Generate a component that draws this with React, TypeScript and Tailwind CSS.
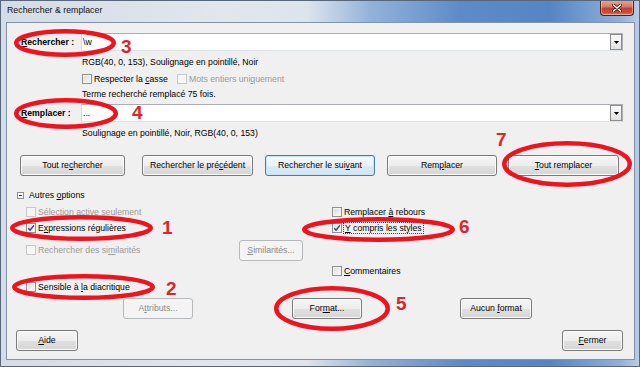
import type { ReactNode } from 'react';

// Boîte de dialogue « Rechercher & remplacer » (style Windows 7) avec annotations rouges.

function U({ children }: { children: ReactNode }) {
  return <span className="underline decoration-[0.8px] underline-offset-[1px]">{children}</span>;
}

function Checkbox({ checked = false, disabled = false }: { checked?: boolean; disabled?: boolean }) {
  return (
    <span
      className={`flex h-[10px] w-[10px] shrink-0 items-center justify-center border ${
        disabled
          ? 'border-[#c8c8c8] bg-[#f6f6f6]'
          : 'border-[#8e8f8f] bg-[linear-gradient(135deg,#d9d9d9,#fbfbfb)] shadow-[inset_0_0_0_1px_#f4f4f4]'
      }`}
    >
      {checked ? (
        <svg viewBox="0 0 8 8" className="h-[8px] w-[8px]">
          <path d="M1.2 4.2 L3.1 6.2 L6.9 1.4" fill="none" stroke="#2f4480" strokeWidth="1.5" />
        </svg>
      ) : null}
    </span>
  );
}

function Button({
  children,
  className = '',
  focused = false,
  disabled = false
}: {
  children: ReactNode;
  className?: string;
  focused?: boolean;
  disabled?: boolean;
}) {
  const look = disabled
    ? 'border-[#b5b9bc] bg-[#f4f4f4] text-[#8c8c8c]'
    : focused
      ? 'border-[#3c7fb1] bg-[linear-gradient(to_bottom,#f4f9fc_0%,#eaf3f9_50%,#dcebf5_51%,#d2e5f2_100%)] text-black shadow-[inset_0_0_0_1px_#c9e6f8]'
      : 'border-[#7a7a7a] bg-[linear-gradient(to_bottom,#f6f6f6_0%,#ededed_50%,#e0e0e0_51%,#d6d6d6_100%)] text-black shadow-[inset_0_0_0_1px_#fbfbfb]';
  return (
    <div className={`flex h-[21px] shrink-0 items-center justify-center rounded-[3px] border ${look} ${className}`}>
      <span>{children}</span>
    </div>
  );
}

function Combo({ value }: { value: string }) {
  return (
    <div className="flex h-[18px] w-[542px] items-center border border-[#abadb3] border-b-[#dde3ea] border-l-[#d5d8de] bg-white">
      <span className="flex-1 pl-[1px] leading-none">{value}</span>
      <span className="flex h-[16px] w-[12px] items-center justify-center border border-[#8d8d8d] bg-[linear-gradient(to_bottom,#fbfbfb,#e2e2e2)]">
        <svg viewBox="0 0 5 3" className="h-[3px] w-[5px]">
          <path d="M0 0H5L2.5 3Z" fill="#000" />
        </svg>
      </span>
    </div>
  );
}

function CloseButton() {
  return (
    <div className="-mt-px mr-[5px] flex h-[16px] w-[34px] items-center justify-center rounded-b-[4px] border border-t-0 border-[#5a1c15] bg-[linear-gradient(to_bottom,#e8a898_0%,#d77a66_45%,#c4402c_55%,#c9503a_85%,#dd8a6a_100%)] shadow-[inset_0_0_0_1px_rgba(255,220,210,0.45)]">
      <svg viewBox="0 0 10 8" className="h-[8px] w-[10px]">
        <path d="M1.5 1 L8.5 7 M8.5 1 L1.5 7" stroke="#4a1510" strokeWidth="3" strokeLinecap="round" />
        <path d="M1.5 1 L8.5 7 M8.5 1 L1.5 7" stroke="#ffffff" strokeWidth="1.6" strokeLinecap="round" />
      </svg>
    </div>
  );
}

const marks = [
  { t: '3', x: 121, y: 37 },
  { t: '4', x: 132, y: 103 },
  { t: '7', x: 496, y: 130 },
  { t: '1', x: 162, y: 218 },
  { t: '6', x: 459, y: 217 },
  { t: '2', x: 166, y: 279 },
  { t: '5', x: 396, y: 294 }
];

const rings = [
  { cx: 65, cy: 43, rx: 51, ry: 14 },
  { cx: 66, cy: 113.5, rx: 52, ry: 15.5 },
  { cx: 567, cy: 164, rx: 65, ry: 23 },
  { cx: 81.5, cy: 228, rx: 71.5, ry: 13 },
  { cx: 378.5, cy: 229.5, rx: 76.5, ry: 12.5 },
  { cx: 83.5, cy: 287, rx: 71.5, ry: 13 },
  { cx: 332, cy: 308.5, rx: 58, ry: 22.5 }
];

export default function App() {
  return (
    <div className="relative flex h-[367px] w-[640px] flex-col overflow-hidden border border-[#58677c] bg-[linear-gradient(to_right,#d3dce7_0%,#e2e7ed_35%,#dce4ee_48%,#93b2d9_58%,#5d8bc8_72%,#5585c4_86%,#8eb0dc_97%,#b9cde6_100%)] font-['Liberation_Sans',Arial,sans-serif] text-[8.7px] leading-none text-black">
      <div className="flex h-[21px] shrink-0 items-start justify-between">
        <span className="pl-[6px] pt-[5px] text-[8.8px] text-[#111]">Rechercher &amp; remplacer</span>
        <CloseButton />
      </div>

      <div className="ml-[5px] mr-[4px] flex h-[338px] flex-col border border-[#8193a9] bg-[#f0f0f0]">
        <div className="mt-[10px] flex h-[18px] items-center">
          <span className="ml-[14px] w-[60px] font-bold">
            <U>R</U>echercher :
          </span>
          <Combo value="\w" />
        </div>
        <div className="flex h-[22px] items-center pl-[75px]">RGB(40, 0, 153), Soulignage en pointillé, Noir</div>
        <div className="flex h-[12px] items-center pl-[75px]">
          <div className="flex w-[95px] items-center gap-[2px]">
            <Checkbox />
            <span>
              Respecter la <U>c</U>asse
            </span>
          </div>
          <div className="flex items-center gap-[2px] text-[#9a9a9a]">
            <Checkbox disabled />
            <span>
              Mots entiers uni<U>q</U>uement
            </span>
          </div>
        </div>
        <div className="flex h-[19px] items-center pl-[75px]">Terme recherché remplacé 75 fois.</div>
        <div className="flex h-[18px] items-center">
          <span className="ml-[14px] w-[60px] font-bold">
            <U>R</U>emplacer :
          </span>
          <Combo value="..." />
        </div>
        <div className="flex h-[22px] items-center pl-[75px]">Soulignage en pointillé, Noir, RGB(40, 0, 153)</div>

        <div className="mt-[11px] flex h-[21px]">
          <Button className="ml-[13px] w-[105px]">
            Tout re<U>c</U>hercher
          </Button>
          <Button className="ml-[17px] w-[111px]">
            Rechercher le pré<U>c</U>édent
          </Button>
          <Button className="ml-[12px] w-[110px]" focused>
            Rechercher le sui<U>v</U>ant
          </Button>
          <Button className="ml-[12px] w-[110px]">
            Rem<U>p</U>lacer
          </Button>
          <Button className="ml-[11px] w-[111px]">
            <U>T</U>out remplacer
          </Button>
        </div>

        <div className="mt-[12px] flex h-[14px] items-center pl-[10px]">
          <span className="flex h-[7px] w-[7px] items-center justify-center border border-[#8f8f8f] bg-white">
            <span className="h-px w-[3px] bg-[#333]" />
          </span>
          <span className="ml-[5px]">
            Autres <U>o</U>ptions
          </span>
        </div>

        <div className="mt-[2px] flex h-[16px] items-center">
          <div className="flex w-[325px] items-center gap-[2px] pl-[19px] text-[#9a9a9a]">
            <Checkbox disabled />
            <span>
              Sélection <U>a</U>ctive seulement
            </span>
          </div>
          <div className="flex items-center gap-[2px]">
            <Checkbox />
            <span>
              Remplacer <U>à</U> rebours
            </span>
          </div>
        </div>
        <div className="flex h-[16px] items-center">
          <div className="flex w-[325px] items-center gap-[2px] pl-[19px]">
            <Checkbox checked />
            <span>
              E<U>x</U>pressions régulières
            </span>
          </div>
          <div className="flex items-center gap-[2px]">
            <Checkbox checked />
            <span className="outline-dotted outline-1 outline-[#444] px-px py-px">
              <U>Y</U> compris les styles
            </span>
          </div>
        </div>
        <div className="flex h-[28px] items-center">
          <div className="flex w-[232px] items-center gap-[2px] pl-[19px] text-[#9a9a9a]">
            <Checkbox disabled />
            <span>
              Rechercher des si<U>m</U>ilarités
            </span>
          </div>
          <Button className="h-[20px] w-[64px]" disabled>
            <U>S</U>imilarités...
          </Button>
        </div>
        <div className="flex h-[14px] items-center">
          <div className="ml-[325px] flex items-center gap-[2px]">
            <Checkbox />
            <span>
              <U>C</U>ommentaires
            </span>
          </div>
        </div>
        <div className="mt-[2px] flex h-[14px] items-center">
          <div className="flex items-center gap-[2px] pl-[19px]">
            <Checkbox />
            <span>
              Sensible à <U>l</U>a diacritique
            </span>
          </div>
        </div>

        <div className="mt-[4px] flex h-[21px]">
          <Button className="ml-[116px] w-[70px]" disabled>
            A<U>t</U>tributs...
          </Button>
          <Button className="ml-[99px] w-[70px]">
            For<U>m</U>at...
          </Button>
          <Button className="ml-[98px] w-[72px]">
            Aucun <U>f</U>ormat
          </Button>
        </div>

        <div className="mt-[11px] flex h-[21px] justify-between">
          <Button className="ml-[9px] w-[62px]">
            <U>A</U>ide
          </Button>
          <Button className="mr-[11px] w-[61px]">
            <U>F</U>ermer
          </Button>
        </div>
      </div>

      <svg className="pointer-events-none absolute -left-px -top-px" width="640" height="367" viewBox="0 0 640 367">
        {rings.map((r, i) => (
          <ellipse key={i} cx={r.cx} cy={r.cy} rx={r.rx - 2.25} ry={r.ry - 2.25} fill="none" stroke="#f0121c" strokeWidth="4.5" />
        ))}
      </svg>
      {marks.map((m) => (
        <span
          key={m.t}
          className="pointer-events-none absolute text-[19px] font-bold leading-none text-[#e0242a]"
          style={{ left: m.x - 1, top: m.y - 1 }}
        >
          {m.t}
        </span>
      ))}
    </div>
  );
}
